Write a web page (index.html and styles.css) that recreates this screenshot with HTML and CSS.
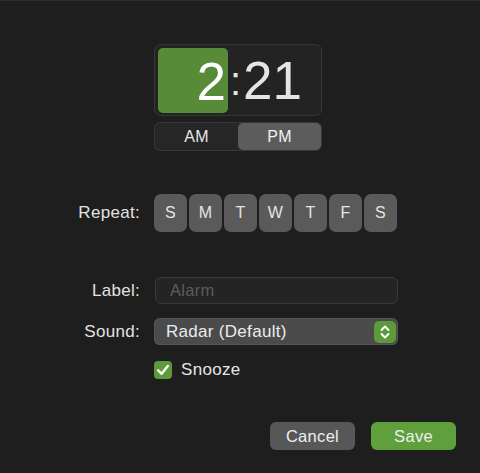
FILE: index.html
```html
<!DOCTYPE html>
<html>
<head>
<meta charset="utf-8">
<link rel="stylesheet" href="styles.css">
</head>
<body>
<div class="window">
  <div class="time-area">
    <div class="clock">
      <div class="hour">2</div>
      <div class="colon">:</div>
      <div class="mins">21</div>
    </div>
    <div class="segmented">
      <div class="seg">AM</div>
      <div class="seg selected">PM</div>
    </div>
  </div>

  <div class="form">
    <div class="row repeat-row">
      <div class="lbl">Repeat:</div>
      <div class="days">
        <div class="day">S</div>
        <div class="day">M</div>
        <div class="day">T</div>
        <div class="day">W</div>
        <div class="day">T</div>
        <div class="day">F</div>
        <div class="day">S</div>
      </div>
    </div>
    <div class="row label-row">
      <div class="lbl">Label:</div>
      <div class="input">Alarm</div>
    </div>
    <div class="row sound-row">
      <div class="lbl">Sound:</div>
      <div class="popup">
        <span class="popup-text">Radar (Default)</span>
        <span class="stepper">
          <svg width="22" height="22" viewBox="0 0 22 22">
            <path d="M7.5 9 L11 5.5 L14.5 9" fill="none" stroke="#fff" stroke-width="2" stroke-linecap="round" stroke-linejoin="round"/>
            <path d="M7.5 13 L11 16.5 L14.5 13" fill="none" stroke="#fff" stroke-width="2" stroke-linecap="round" stroke-linejoin="round"/>
          </svg>
        </span>
      </div>
    </div>
    <div class="row snooze-row">
      <div class="lbl"></div>
      <div class="check">
        <span class="box">
          <svg width="18" height="18" viewBox="0 0 18 18">
            <path d="M4.2 9.4 L7.6 12.8 L13.8 5" fill="none" stroke="#fff" stroke-width="2.4" stroke-linecap="round" stroke-linejoin="round"/>
          </svg>
        </span>
        <span class="check-text">Snooze</span>
      </div>
    </div>
  </div>

  <div class="actions">
    <div class="btn cancel">Cancel</div>
    <div class="btn save">Save</div>
  </div>
</div>
</body>
</html>
```

FILE: styles.css
```css
html, body {
  margin: 0;
  padding: 0;
  background: #1e1e1e;
}
* { box-sizing: border-box; }

.window {
  width: 480px;
  height: 473px;
  background: #1e1e1e;
  border-top: 1px solid #2c2c2c;
  font-family: "Liberation Sans", Arial, sans-serif;
  font-size: 17px;
  letter-spacing: 0.3px;
  color: #e2e2e2;
  padding-top: 43px;
}

.time-area {
  margin-left: 154px;
  width: 168px;
  display: flex;
  flex-direction: column;
  gap: 6px;
}

.clock {
  height: 72px;
  background: #232323;
  border: 1px solid #363636;
  border-radius: 7px;
  padding: 3px;
  display: flex;
  align-items: center;
  font-size: 53px;
  letter-spacing: 0;
  color: #e4e4e4;
}
.hour {
  width: 70px;
  height: 65px;
  background: #578b38;
  border-radius: 5px;
  color: #ffffff;
  text-align: right;
  padding-right: 2px;
  padding-top: 1px;
  line-height: 65px;
}
.colon {
  width: 15px;
  text-align: center;
  line-height: 65px;
  font-size: 40px;
  padding-top: 2px;
}
.mins {
  line-height: 65px;
  padding-top: 1px;
}

.segmented {
  height: 29px;
  display: flex;
  background: #262626;
  border: 1px solid #383838;
  border-radius: 6px;
  padding: 0;
}
.seg {
  flex: 1;
  display: flex;
  align-items: center;
  justify-content: center;
  font-size: 16px;
  color: #e6e6e6;
  border-radius: 5px;
}
.seg.selected {
  background: #5c5c5c;
  color: #f2f2f2;
}

.form {
  display: flex;
  flex-direction: column;
}
.row {
  display: grid;
  grid-template-columns: 140px 244px;
  column-gap: 14px;
  align-items: center;
}
.lbl {
  text-align: right;
  color: #e2e2e2;
}
.repeat-row { margin-top: 43px; }
.label-row { margin-top: 45px; }
.sound-row { margin-top: 14px; }
.snooze-row { margin-top: 15px; }

.days {
  display: flex;
  gap: 2px;
}
.day {
  width: 33px;
  height: 38px;
  background: #5a5a5a;
  border-radius: 7px;
  display: flex;
  align-items: center;
  justify-content: center;
  font-size: 16px;
  color: #e4e4e4;
}

.input {
  margin-left: 1px;
  height: 27px;
  width: 243px;
  background: #242424;
  border: 1px solid #3a3a3a;
  border-radius: 6px;
  padding-left: 14px;
  display: flex;
  align-items: center;
  color: #5c5c5c;
  font-size: 16.5px;
}

.popup {
  height: 27px;
  width: 244px;
  background: #4b4b4b;
  border-radius: 6px;
  display: flex;
  align-items: center;
  justify-content: space-between;
  padding-left: 12px;
  padding-right: 2px;
  color: #ececec;
  box-shadow: inset 0 0 0 1px #555;
}
.stepper {
  width: 22px;
  height: 22px;
  background: #5d9a3b;
  border-radius: 5px;
  display: flex;
}

.check {
  display: flex;
  align-items: center;
  gap: 9px;
}
.box {
  width: 18px;
  height: 18px;
  background: #5d9a3b;
  border-radius: 4px;
  display: flex;
}
.check-text {
  color: #e6e6e6;
}

.actions {
  display: flex;
  justify-content: flex-end;
  gap: 16px;
  padding-right: 24px;
  margin-top: 42px;
}
.btn {
  width: 85px;
  height: 28px;
  border-radius: 6px;
  display: flex;
  align-items: center;
  justify-content: center;
  font-size: 16.5px;
  color: #efefef;
}
.cancel { background: #575757; }
.save { background: #5fa03d; }
```
